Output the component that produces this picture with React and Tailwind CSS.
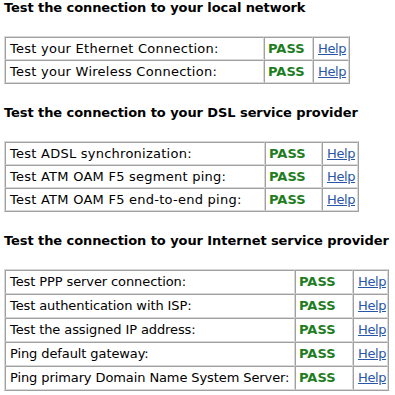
import React from "react";

const sections = [
  {
    title: "Test the connection to your local network",
    tableW: "w-[344px]",
    widths: ["w-[259px]", "w-[49px]", "w-[36px]"],
    rowH: "h-[23px]",
    track: "tracking-[0.25px]",
    rows: ["Test your Ethernet Connection:", "Test your Wireless Connection:"],
  },
  {
    title: "Test the connection to your DSL service provider",
    tableW: "w-[353px]",
    widths: ["w-[260px]", "w-[57px]", "w-[36px]"],
    rowH: "h-[23px]",
    track: "tracking-[0.25px]",
    rows: [
      "Test ADSL synchronization:",
      "Test ATM OAM F5 segment ping:",
      "Test ATM OAM F5 end-to-end ping:",
    ],
  },
  {
    title: "Test the connection to your Internet service provider",
    tableW: "w-[383px]",
    widths: ["w-[290px]", "w-[58px]", "w-[35px]"],
    rowH: "h-[24px]",
    track: "tracking-[-0.1px]",
    rows: [
      "Test PPP server connection:",
      "Test authentication with ISP:",
      "Test the assigned IP address:",
      "Ping default gateway:",
      "Ping primary Domain Name System Server:",
    ],
  },
];

const cell = "border border-t-[#a0a0a0] border-l-[#a0a0a0] border-r-[#d8d8d8] border-b-[#d8d8d8] align-middle whitespace-nowrap overflow-hidden";

const App = () => {
  return (
    <div className="min-h-[395px] bg-white px-[4px] pt-0 font-['DejaVu_Sans',Verdana,sans-serif] text-[13px] leading-[16px] text-black">
      {sections.map((section, i) => (
        <div key={i} className={i === 0 ? "" : "mt-[21px]"}>
          <h2 className="mb-[20px] whitespace-nowrap font-bold tracking-[-0.08px]">{section.title}</h2>
          <table className={`${section.tableW} table-fixed border-separate border-spacing-0 border border-t-[#d8d8d8] border-l-[#d8d8d8] border-r-[#a0a0a0] border-b-[#a0a0a0]`}>
            <colgroup>
              <col className={section.widths[0]} />
              <col className={section.widths[1]} />
              <col className={section.widths[2]} />
            </colgroup>
            <tbody>
              {section.rows.map((row, j) => (
                <tr key={j}>
                  <td className={`${cell} ${section.rowH} ${section.track} pl-[4px]`}>{row}</td>
                  <td className={`${cell} ${section.rowH} pl-[3px] font-bold text-[#1e7d1e]`}>PASS</td>
                  <td className={`${cell} ${section.rowH} pl-[4px]`}>
                    <a href="#" className="text-[#2a56a8] underline tracking-[-0.4px]">
                      Help
                    </a>
                  </td>
                </tr>
              ))}
            </tbody>
          </table>
        </div>
      ))}
    </div>
  );
};

export default App;
